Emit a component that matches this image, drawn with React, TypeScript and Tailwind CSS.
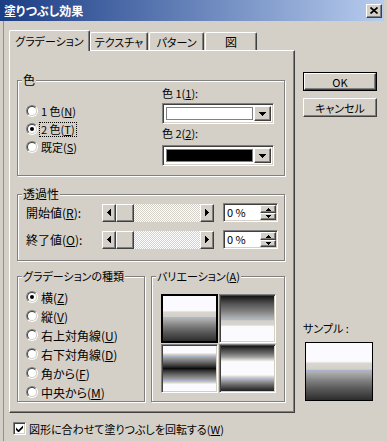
const raised =
  "border border-t-white border-l-white border-r-[#404040] border-b-[#404040] shadow-[inset_-1px_-1px_0_#808080]";
const sunken =
  "border border-t-[#808080] border-l-[#808080] border-r-white border-b-white shadow-[inset_1px_1px_0_#404040,inset_-1px_-1px_0_#d4d0c8]";

const g1 =
  "bg-[linear-gradient(to_bottom,#fbfbff_0%,#fbfbff_32%,#d8d6d0_36%,#d4d0c8_46%,#a6b4d0_48%,#b0b0b0_51%,#9a9a9a_58%,#808080_66%,#6a6a6a_74%,#555555_82%,#444444_90%,#2c2c2c_100%)]";
const g2 =
  "bg-[linear-gradient(to_bottom,#141414_0%,#3a3a3a_10%,#555555_18%,#6a6a6a_26%,#808080_34%,#9a9a9a_42%,#b0b0b0_49%,#a6b4d0_52%,#d4d0c8_55%,#d8d6d0_64%,#fbfbff_68%,#fbfbff_100%)]";
const g3 =
  "bg-[linear-gradient(to_bottom,#fbfbff_0%,#fbfbff_15%,#d4d0c8_19%,#a6b4d0_23%,#9a9a9a_27%,#6a6a6a_36%,#333333_45%,#0c0c0c_50%,#333333_55%,#6a6a6a_64%,#9a9a9a_73%,#a6b4d0_77%,#d4d0c8_81%,#fbfbff_85%,#fbfbff_100%)]";
const g4 =
  "bg-[linear-gradient(to_bottom,#141414_0%,#444444_8%,#6a6a6a_16%,#9a9a9a_24%,#d4d0c8_30%,#fbfbff_35%,#fbfbff_64%,#d4d0c8_69%,#a6b4d0_74%,#9a9a9a_78%,#6a6a6a_86%,#444444_93%,#202020_100%)]";

const LeftTri = () => (
  <svg width="4" height="7" viewBox="0 0 4 7" shapeRendering="crispEdges">
    <path d="M4 0v7L0 3.5z" fill="#000" />
  </svg>
);

const RightTri = () => (
  <svg width="4" height="7" viewBox="0 0 4 7" shapeRendering="crispEdges">
    <path d="M0 0v7l4-3.5z" fill="#000" />
  </svg>
);

const DownTri = ({ w = 7 }: { w?: number }) => (
  <svg width={w} height={Math.ceil(w / 2)} viewBox={`0 0 ${w} ${Math.ceil(w / 2)}`} shapeRendering="crispEdges">
    <path d={`M0 0h${w}l-${w / 2} ${Math.ceil(w / 2)}z`} fill="#000" />
  </svg>
);

const UpTri = ({ w = 5 }: { w?: number }) => (
  <svg width={w} height={Math.ceil(w / 2)} viewBox={`0 0 ${w} ${Math.ceil(w / 2)}`} shapeRendering="crispEdges">
    <path d={`M0 ${Math.ceil(w / 2)}h${w}l-${w / 2}-${Math.ceil(w / 2)}z`} fill="#000" />
  </svg>
);

function Radio({
  checked,
  focus,
  children,
}: {
  checked?: boolean;
  focus?: boolean;
  children: React.ReactNode;
}) {
  return (
    <div className="flex items-center h-[18px]">
      <span className="w-[12px] h-[12px] rounded-full border border-t-[#808080] border-l-[#808080] border-r-white border-b-white flex items-center justify-center">
        <span className="w-[10px] h-[10px] rounded-full border border-t-[#404040] border-l-[#404040] border-r-[#d4d0c8] border-b-[#d4d0c8] bg-white flex items-center justify-center">
          {checked && <span className="w-[4px] h-[4px] rounded-full bg-black" />}
        </span>
      </span>
      <span
        className={
          focus
            ? "ml-[2px] px-[1px] outline outline-1 outline-dotted outline-black leading-[13px]"
            : "ml-[2px] px-[1px] leading-[13px]"
        }
      >
        {children}
      </span>
    </div>
  );
}

function Group({
  label,
  className,
  children,
}: {
  label: React.ReactNode;
  className: string;
  children: React.ReactNode;
}) {
  return (
    <fieldset
      className={`border border-[#808080] shadow-[1px_1px_0_#fff,inset_1px_1px_0_#fff] ${className}`}
    >
      <legend className="ml-[4px] px-[1px] bg-[#d4d0c8] leading-[13px]">{label}</legend>
      {children}
    </fieldset>
  );
}

function ColorDrop({ swatch }: { swatch: string }) {
  return (
    <div className={`w-[112px] h-[21px] bg-white flex p-[2px] ${sunken}`}>
      <div className="flex-1 p-[1px]">
        <div className={`h-full border border-[#808080] ${swatch}`} />
      </div>
      <div className={`w-[17px] bg-[#d4d0c8] flex items-center justify-center ${raised}`}>
        <DownTri />
      </div>
    </div>
  );
}

function HScroll() {
  return (
    <div className="flex w-[112px] h-[18px]">
      <div className={`w-[14px] bg-[#d4d0c8] flex items-center justify-center ${raised}`}>
        <LeftTri />
      </div>
      <div className={`w-[18px] bg-[#d4d0c8] ${raised}`} />
      <div className="flex-1 bg-[repeating-conic-gradient(#ffffff_0%_25%,#d4d0c8_0%_50%)] bg-[length:2px_2px]" />
      <div className={`w-[14px] bg-[#d4d0c8] flex items-center justify-center ${raised}`}>
        <RightTri />
      </div>
    </div>
  );
}

function SpinEdit() {
  return (
    <div className={`w-[55px] h-[19px] bg-white flex p-[1px] ${sunken}`}>
      <span className="flex-1 pl-[2px] leading-[15px]">0 %</span>
      <div className="w-[16px] flex flex-col">
        <div className={`h-[8px] bg-[#d4d0c8] flex items-center justify-center ${raised}`}>
          <UpTri />
        </div>
        <div className={`h-[7px] bg-[#d4d0c8] flex items-center justify-center ${raised}`}>
          <DownTri w={5} />
        </div>
      </div>
    </div>
  );
}

function SliderRow({ label }: { label: React.ReactNode }) {
  return (
    <div className="flex items-center h-[19px]">
      <span className="w-[76px] leading-[13px] text-[12px]">{label}</span>
      <HScroll />
      <div className="ml-[9px]">
        <SpinEdit />
      </div>
    </div>
  );
}

function Tab({ className, children }: { className: string; children: React.ReactNode }) {
  return (
    <div
      className={`mt-[2px] h-[18px] border-t border-l border-white border-r border-r-[#404040] shadow-[inset_-1px_0_0_#808080] rounded-t-[2px] flex items-center justify-center ${className}`}
    >
      {children}
    </div>
  );
}

function Swatch({ bg, selected }: { bg: string; selected?: boolean }) {
  return (
    <div className={selected ? "border-2 border-black bg-white" : `p-[1px] ${sunken}`}>
      <div className={`w-full h-full ${bg}`} />
    </div>
  );
}

export default function App() {
  return (
    <div className="w-[387px] h-[441px] bg-[#d4d0c8] flex flex-col overflow-hidden text-black text-[11px] leading-[14px] font-['Noto_Sans_CJK_JP','Noto_Sans_CJK_SC',sans-serif] [font-feature-settings:'palt']">
      <div className="h-[21px] mr-[3px] pl-[4px] pr-[2px] flex items-center bg-linear-to-r from-[#1c3c84] to-[#b8ccee]">
        <span className="flex-1 text-white font-bold text-[12px]">塗りつぶし効果</span>
        <div className={`w-[16px] h-[14px] bg-[#d4d0c8] flex items-center justify-center ${raised}`}>
          <svg width="8" height="7" viewBox="0 0 8 7">
            <path d="M0.5 0.5l7 6M7.5 0.5l-7 6" stroke="#000" strokeWidth="1.7" />
          </svg>
        </div>
      </div>

      <div className="flex-1 ml-[3px] border-l border-[#909090] pl-[5px] pt-[9px]">
        <div className="flex">
          <div className="w-[286px]">
            <div className="flex h-[20px] items-start">
              <div className="relative z-10 w-[81px] h-[21px] bg-[#d4d0c8] border-t border-l border-white border-r border-r-[#404040] shadow-[inset_-1px_0_0_#808080] rounded-t-[2px] flex items-center justify-center">
                グラデーション
              </div>
              <Tab className="w-[58px]">テクスチャ</Tab>
              <Tab className="ml-[1px] w-[55px]">パターン</Tab>
              <Tab className="ml-[1px] w-[52px] text-[12px]">図</Tab>
            </div>

            <div className="h-[363px] border border-t-white border-l-white border-r-[#404040] border-b-[#404040] shadow-[inset_-1px_-1px_0_#808080] pl-[7px] pt-[22px]">
              <Group label={<span className="text-[12px]">色</span>} className="w-[268px]">
                <div className="h-[88px] flex">
                  <div className="pl-[8px] pt-[15px]">
                    <Radio>
                      1 色(<u>N</u>)
                    </Radio>
                    <Radio checked focus>
                      2 色(<u>T</u>)
                    </Radio>
                    <Radio>
                      既定(<u>S</u>)
                    </Radio>
                  </div>
                  <div className="ml-auto mr-[10px] w-[112px]">
                    <div className="h-[13px] leading-[13px]">
                      色 1(<u>1</u>):
                    </div>
                    <div className="mt-[3px]">
                      <ColorDrop swatch="bg-white" />
                    </div>
                    <div className="mt-[3px] h-[13px] leading-[13px]">
                      色 2(<u>2</u>):
                    </div>
                    <div className="mt-[5px]">
                      <ColorDrop swatch="bg-black" />
                    </div>
                  </div>
                </div>
              </Group>

              <Group label={<span className="text-[12px]">透過性</span>} className="w-[268px] mt-[11px]">
                <div className="h-[59px] pl-[8px] pt-[2px]">
                  <SliderRow
                    label={
                      <>
                        開始値(<u>R</u>):
                      </>
                    }
                  />
                  <div className="mt-[8px]">
                    <SliderRow
                      label={
                        <>
                          終了値(<u>O</u>):
                        </>
                      }
                    />
                  </div>
                </div>
              </Group>

              <div className="flex mt-[9px]">
                <Group label="グラデーションの種類" className="w-[128px]">
                  <div className="h-[118px] pl-[8px] pt-[5px] flex flex-col gap-[1px] text-[12px]">
                    <Radio checked>
                      横(<u>Z</u>)
                    </Radio>
                    <Radio>
                      縦(<u>V</u>)
                    </Radio>
                    <Radio>
                      右上対角線(<u>U</u>)
                    </Radio>
                    <Radio>
                      右下対角線(<u>D</u>)
                    </Radio>
                    <Radio>
                      角から(<u>F</u>)
                    </Radio>
                    <Radio>
                      中央から(<u>M</u>)
                    </Radio>
                  </div>
                </Group>

                <Group
                  label={
                    <>
                      バリエーション(<u>A</u>)
                    </>
                  }
                  className="w-[134px] ml-[6px]"
                >
                  <div className="h-[118px] pl-[9px] pt-[11px]">
                    <div className="grid grid-cols-[57px_57px] grid-rows-[49px_49px] gap-[1px]">
                      <Swatch bg={g1} selected />
                      <Swatch bg={g2} />
                      <Swatch bg={g3} />
                      <Swatch bg={g4} />
                    </div>
                  </div>
                </Group>
              </div>
            </div>
          </div>

          <div className="ml-[8px] w-[74px] flex flex-col">
            <div className="mt-[42px] h-[19px] border border-black">
              <div className={`h-full bg-[#d4d0c8] flex items-center justify-center ${raised}`}>OK</div>
            </div>
            <div className={`mt-[7px] h-[19px] bg-[#d4d0c8] flex items-center justify-center ${raised}`}>
              キャンセル
            </div>
            <div className="mt-[204px] h-[14px]">サンプル :</div>
            <div className={`mt-[7px] ml-[2px] w-[68px] h-[59px] border border-black ${g1}`} />
          </div>
        </div>

        <div className="mt-[9px] flex items-center h-[13px]">
          <div className={`ml-[4px] w-[13px] h-[13px] bg-white flex items-center justify-center ${sunken}`}>
            <svg width="7" height="7" viewBox="0 0 7 7">
              <path d="M0 2.5l2.5 2.5L7 0.5V3L2.5 7.5L0 5z" fill="#000" />
            </svg>
          </div>
          <span className="ml-[3px]">
            図形に合わせて塗りつぶしを回転する(<u>W</u>)
          </span>
        </div>
      </div>
    </div>
  );
}
